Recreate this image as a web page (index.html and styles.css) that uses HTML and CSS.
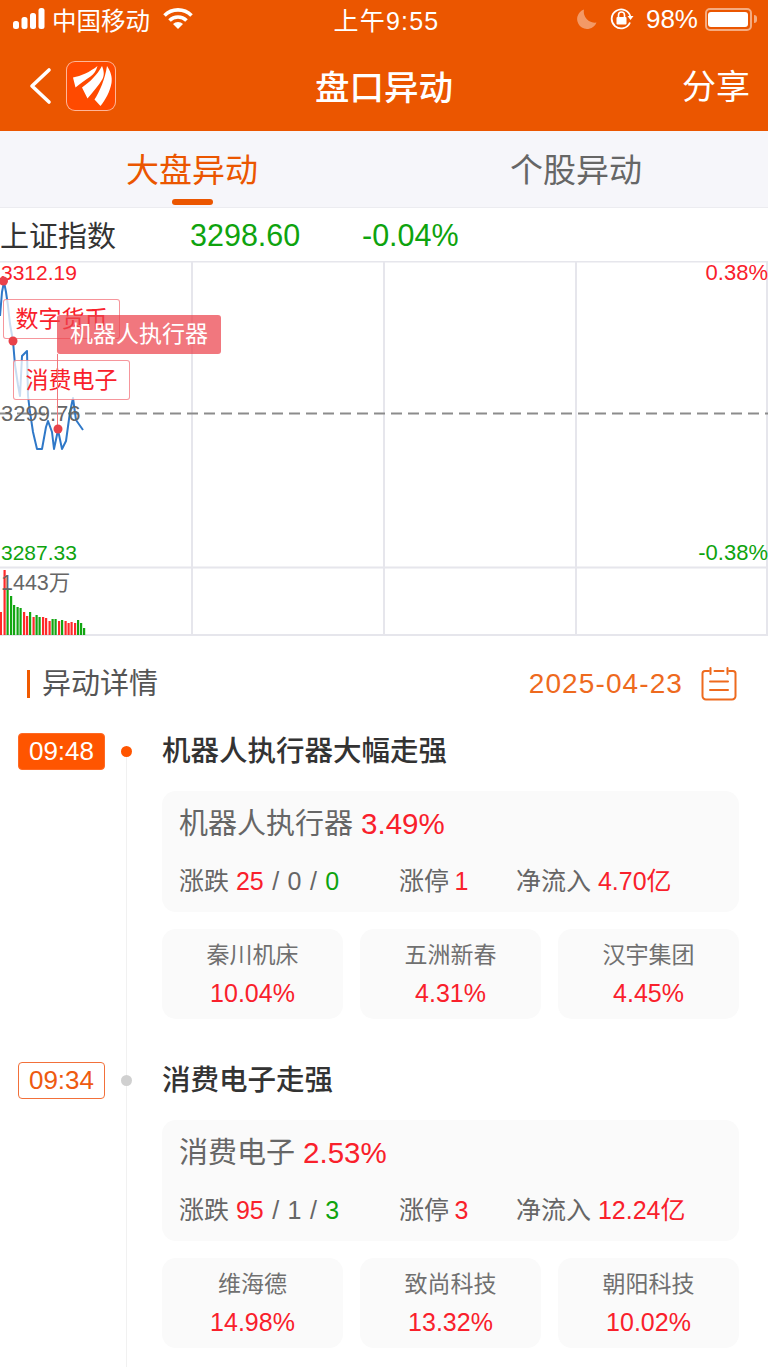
FILE: index.html
```html
<!DOCTYPE html>
<html lang="zh-CN">
<head>
    <meta charset="UTF-8" />
    <title>盘口异动</title>
    <link rel="stylesheet" href="styles.css">
</head>
<body>
    <header class="top-bar">
        <div class="status-bar">
            <div class="status-side">
                <svg class="signal" width="33" height="22" viewBox="0 0 33 22">
                    <rect x="0" y="13" width="6" height="8" rx="2.5" fill="#fff"/>
                    <rect x="8.5" y="9" width="6" height="12" rx="2.5" fill="#fff"/>
                    <rect x="17" y="5" width="6" height="16" rx="2.5" fill="#fff"/>
                    <rect x="25.5" y="0" width="6" height="21" rx="2.5" fill="#fff"/>
                </svg>
                <span class="carrier">中国移动</span>
                <svg class="wifi" width="30" height="22" viewBox="0 0 30 22">
                    <path d="M1.5 7.5 A19 19 0 0 1 28.5 7.5" fill="none" stroke="#fff" stroke-width="3.6"/>
                    <path d="M6.5 12.5 A12 12 0 0 1 23.5 12.5" fill="none" stroke="#fff" stroke-width="3.6"/>
                    <path d="M10 16 L15 21 L20 16 A7 7 0 0 0 10 16 Z" fill="#fff"/>
                </svg>
            </div>
            <div class="status-time">上午9:55</div>
            <div class="status-side status-right">
                <svg class="moon" width="20" height="20" viewBox="0 0 20 20">
                    <path d="M7 0.5 A10 10 0 1 0 19.5 13.5 A11 11 0 0 1 7 0.5 Z" fill="#fff" fill-opacity="0.4"/>
                </svg>
                <svg class="lock" width="24" height="22" viewBox="0 0 24 22">
                    <path d="M20 14.5 A9.5 9.5 0 1 1 20.5 9" fill="none" stroke="#fff" stroke-width="1.8"/>
                    <path d="M17.5 8 L23.5 8 L20.5 12 Z" fill="#fff"/>
                    <rect x="6.5" y="9" width="10" height="7.5" rx="1" fill="#fff"/>
                    <path d="M8.5 9 V7 A3 3 0 0 1 14.5 7 V9" fill="none" stroke="#fff" stroke-width="1.6"/>
                </svg>
                <span class="battery-pct">98%</span>
                <div class="battery"><div class="battery-fill"></div></div>
                <div class="battery-cap"></div>
            </div>
        </div>
        <nav class="nav-bar">
            <div class="nav-left">
                <svg class="back" width="24" height="38" viewBox="0 0 24 38">
                    <path d="M21 3 L4 19 L21 35" fill="none" stroke="#fff" stroke-width="3.6" stroke-linecap="round" stroke-linejoin="round"/>
                </svg>
                <div class="logo">
                    <svg width="48" height="48" viewBox="0 0 48 48">
                        <path d="M6 15.5 C14 14 23 10 30.5 4 C29 9 27 12 23.5 14.5 C18 18 13 22 8.5 25.5 Z" fill="#fff"/>
                        <path d="M15 25.5 C23 20 30 13 35 4 C37 9 37.5 13 35.5 17 C32 23 26 30 20.5 36.5 Z" fill="#fff"/>
                        <path d="M27.5 37.5 C33 29 38 17 40 4 C43.5 9 45.5 15 44.5 21 C43 30 38 38 33.5 44 Z" fill="#fff"/>
                    </svg>
                </div>
            </div>
            <div class="nav-title">盘口异动</div>
            <div class="nav-share">分享</div>
        </nav>
    </header>

    <div class="tabs">
        <div class="tab tab-active">大盘异动</div>
        <div class="tab">个股异动</div>
    </div>

    <div class="index-row">
        <span class="index-name">上证指数</span>
        <span class="index-price">3298.60</span>
        <span class="index-change">-0.04%</span>
    </div>

    <div class="chart">
        <svg class="chart-layer" width="768" height="375" viewBox="0 261 768 375">
            <g stroke="#e6e6ec" stroke-width="2" fill="none">
                <path d="M0 261.5 H768 M0 567.5 H768 M0 635 H768"/>
                <path d="M192 261 V635 M384 261 V635 M576 261 V635 M767 261 V635"/>
            </g>
            <path d="M0 413.5 H768" stroke="#8c8c8c" stroke-width="2" stroke-dasharray="11 6"/>
            <polyline fill="none" stroke="#2f78c8" stroke-width="2" stroke-linejoin="round"
                points="0,316 2,292 4,282 6,292 8,306 10,324 13,341 15,365 18,385 20,396 22,356 25,353 27,351 28,396 30,412 33,432 37,449 42,449 46,427 48,421 52,432 54,449 58,430 62,449 66,441 70,412 73,398 76,420 83,430"/>
            <g fill="#ff2a2a">
                <rect x="0" y="612" width="2" height="23"/>
                <rect x="3.5" y="570" width="2.2" height="65"/>
                <rect x="23" y="612" width="2.2" height="23"/>
                <rect x="26" y="616" width="2.2" height="19"/>
                <rect x="32.500" y="617" width="2.2" height="18"/>
                <rect x="42" y="617" width="2.2" height="18"/>
                <rect x="45" y="618" width="2.2" height="17"/>
                <rect x="48.500" y="621" width="2.2" height="14"/>
                <rect x="58" y="621" width="2.2" height="14"/>
                <rect x="64.500" y="621" width="2.2" height="14"/>
                <rect x="67.500" y="623" width="2.2" height="12"/>
                <rect x="70.500" y="622" width="2.2" height="13"/>
                <rect x="74" y="623" width="2.2" height="12"/>
            </g>
            <g fill="#12a612">
                <rect x="6.500" y="589" width="2.2" height="46"/>
                <rect x="10" y="596" width="2.2" height="39"/>
                <rect x="13" y="605" width="2.2" height="30"/>
                <rect x="16.500" y="607" width="2.2" height="28"/>
                <rect x="19.500" y="608" width="2.2" height="27"/>
                <rect x="29" y="612" width="2.2" height="23"/>
                <rect x="35.500" y="615" width="2.2" height="20"/>
                <rect x="38.500" y="617" width="2.2" height="18"/>
                <rect x="51.500" y="619" width="2.2" height="16"/>
                <rect x="54.500" y="619" width="2.2" height="16"/>
                <rect x="61" y="620" width="2.2" height="15"/>
                <rect x="77" y="620" width="2.2" height="15"/>
                <rect x="80" y="623" width="2.2" height="12"/>
                <rect x="83" y="628" width="2.2" height="7"/>
            </g>
        </svg>

        <span class="axis axis-high" >3312.19</span>
        <span class="axis axis-high-pct">0.38%</span>
        <span class="axis axis-mid">3299.76</span>
        <span class="axis axis-low">3287.33</span>
        <span class="axis axis-low-pct">-0.38%</span>
        <span class="axis axis-vol">1443万</span>

        <div class="tag tag-digital">数字货币</div>
        <div class="tag tag-consumer">消费电子</div>
        <div class="tag tag-robot">机器人执行器</div>

        <svg class="chart-layer" width="768" height="375" viewBox="0 261 768 375">
            <path d="M57.500 354 V429" stroke="#f0777c" stroke-width="1"/>
            <circle cx="3.500" cy="281" r="4.500" fill="#e8424a"/>
            <circle cx="13" cy="341" r="4.500" fill="#e8424a"/>
            <circle cx="58" cy="429" r="4.500" fill="#e8424a"/>
        </svg>
    </div>

    <div class="section-head">
        <div class="section-title">异动详情</div>
        <div class="section-date">
            <span>2025-04-23</span>
            <svg width="36" height="34" viewBox="0 0 36 34" fill="none" stroke="#ee6a1e" stroke-width="2" stroke-linecap="round">
                <path d="M8 4 H4 A2.500 2.500 0 0 0 1.500 6.500 V29 A3.500 3.500 0 0 0 5 32.500 H31 A3.500 3.500 0 0 0 34.500 29 V6.500 A2.500 2.500 0 0 0 32 4 H28"/>
                <path d="M9.500 1 V7 M26.500 1 V7 M13.500 4 H22.500"/>
                <path d="M9 14.500 H27 M9 23 H27"/>
            </svg>
        </div>
    </div>

    <section class="event event-latest">
        <div class="event-time">
            <span class="time-badge">09:48</span>
            <span class="event-dot"></span>
        </div>
        <div class="event-body">
            <h2 class="event-title">机器人执行器大幅走强</h2>
            <div class="sector-card">
                <div class="sector-name">机器人执行器 <em class="up">3.49%</em></div>
                <div class="sector-stats">
                    <div class="stat-a">涨跌 <em class="up">25</em> / 0 / <em class="down">0</em></div>
                    <div class="stat-b">涨停 <em class="up">1</em></div>
                    <div class="stat-c">净流入 <em class="up">4.70亿</em></div>
                </div>
            </div>
            <div class="stock-list">
                <div class="stock-card"><div class="stock-name">秦川机床</div><div class="stock-pct">10.04%</div></div>
                <div class="stock-card"><div class="stock-name">五洲新春</div><div class="stock-pct">4.31%</div></div>
                <div class="stock-card"><div class="stock-name">汉宇集团</div><div class="stock-pct">4.45%</div></div>
            </div>
        </div>
    </section>

    <section class="event">
        <div class="event-time">
            <span class="time-badge">09:34</span>
            <span class="event-dot"></span>
        </div>
        <div class="event-body">
            <h2 class="event-title">消费电子走强</h2>
            <div class="sector-card">
                <div class="sector-name">消费电子 <em class="up">2.53%</em></div>
                <div class="sector-stats">
                    <div class="stat-a">涨跌 <em class="up">95</em> / 1 / <em class="down">3</em></div>
                    <div class="stat-b">涨停 <em class="up">3</em></div>
                    <div class="stat-c">净流入 <em class="up">12.24亿</em></div>
                </div>
            </div>
            <div class="stock-list">
                <div class="stock-card"><div class="stock-name">维海德</div><div class="stock-pct">14.98%</div></div>
                <div class="stock-card"><div class="stock-name">致尚科技</div><div class="stock-pct">13.32%</div></div>
                <div class="stock-card"><div class="stock-name">朝阳科技</div><div class="stock-pct">10.02%</div></div>
            </div>
        </div>
    </section>
</body>
</html>
```

FILE: styles.css
```css
html {
    height: 100%;
}
body {
    margin: 0;
    padding: 0;
    height: 1367px;
    overflow: hidden;
    background: #fff;
    color: #666;
    font-family: "Liberation Sans", "Noto Sans CJK SC", sans-serif;
}
em {
    font-style: normal;
}
.up {
    color: #f9202b;
}
.down {
    color: #0ea30e;
}

/* top bar */
.top-bar {
    height: 131px;
    background: #eb5600;
    color: #fff;
}
.status-bar {
    position: relative;
    height: 38px;
    display: flex;
    align-items: center;
    justify-content: space-between;
    padding: 0 11px 0 13px;
}
.status-side {
    display: flex;
    align-items: center;
}
.signal {
    margin-right: 6px;
}
.carrier {
    font-size: 24.5px;
}
.wifi {
    margin-left: 13px;
}
.status-time {
    position: absolute;
    left: 5px;
    right: 0;
    text-align: center;
    font-size: 25px;
    letter-spacing: 1.2px;
}
.status-right {
    font-size: 26px;
}
.moon {
    margin-right: 13px;
}
.lock {
    margin-right: 12px;
}
.battery-pct {
    margin-right: 7px;
}
.battery {
    width: 41px;
    height: 15px;
    padding: 2px 1px;
    border: 2px solid rgba(255, 255, 255, 0.5);
    border-radius: 5px;
}
.battery-fill {
    width: 98%;
    height: 100%;
    background: #fff;
    border-radius: 3px;
}
.battery-cap {
    width: 3px;
    height: 8px;
    margin-left: 2px;
    background: rgba(255, 255, 255, 0.5);
    border-radius: 0 3px 3px 0;
}
.nav-bar {
    position: relative;
    height: 93px;
    display: flex;
    align-items: center;
    justify-content: space-between;
    padding: 0 18px 0 28px;
}
.nav-left {
    display: flex;
    align-items: center;
    gap: 14px;
    margin-top: 2px;
}
.logo {
    width: 48px;
    height: 48px;
    background: #ff4a00;
    border: 1px solid rgba(255, 255, 255, 0.6);
    border-radius: 9px;
}
.logo svg {
    display: block;
}
.nav-title {
    position: absolute;
    left: 0;
    right: 0;
    text-align: center;
    font-size: 34.5px;
    font-weight: 500;
}
.nav-share {
    font-size: 34px;
}

/* tabs */
.tabs {
    height: 77px;
    display: flex;
    background: #f6f6fa;
    border-bottom: 1px solid #ececf0;
    box-sizing: border-box;
}
.tab {
    position: relative;
    flex: 1;
    text-align: center;
    font-size: 33px;
    line-height: 80px;
    color: #666;
}
.tab-active {
    color: #eb5600;
}
.tab-active::after {
    content: "";
    position: absolute;
    left: 172px;
    bottom: 2px;
    width: 41px;
    height: 6px;
    background: #eb5600;
    border-radius: 3px;
}

/* index row */
.index-row {
    height: 52px;
    display: flex;
    align-items: center;
    font-size: 30.5px;
}
.index-name {
    width: 190px;
    font-size: 29px;
    color: #333;
}
.index-price {
    width: 172px;
    padding-top: 2px;
    color: #0ea30e;
}
.index-change {
    padding-top: 2px;
    color: #0ea30e;
}

/* chart, a free canvas: everything inside has its place by coordinate */
.chart {
    position: relative;
    height: 375px;
    margin-top: 1px;
}
.chart-layer {
    position: absolute;
    top: 0;
    left: 0;
}
.axis {
    position: absolute;
    font-size: 21px;
    line-height: 24px;
    white-space: nowrap;
}
.axis-high {
    left: 1px;
    top: 0;
    color: #f9202b;
}
.axis-high-pct {
    right: 0;
    top: 0;
    font-size: 22px;
    color: #f9202b;
}
.axis-mid {
    left: 1px;
    top: 141px;
    font-size: 22px;
    color: #666;
}
.axis-low {
    left: 1px;
    top: 280px;
    color: #0ea30e;
}
.axis-low-pct {
    right: 0;
    top: 280px;
    font-size: 22px;
    color: #0ea30e;
}
.axis-vol {
    left: 1px;
    top: 310px;
    font-size: 21.5px;
    color: #666;
}
.tag {
    position: absolute;
    box-sizing: border-box;
    height: 40px;
    line-height: 39px;
    text-align: center;
    font-size: 23px;
    border-radius: 3px;
    white-space: nowrap;
}
.tag-digital, .tag-consumer {
    width: 117px;
    color: #f9202b;
    background: rgba(255, 255, 255, 0.75);
    border: 1px solid rgba(240, 80, 90, 0.6);
}
.tag-digital {
    left: 3px;
    top: 38px;
}
.tag-consumer {
    left: 13px;
    top: 99px;
}
.tag-robot {
    left: 57px;
    top: 54px;
    width: 164px;
    height: 39px;
    color: #fff;
    background: rgba(236, 66, 76, 0.72);
}

/* section head */
.section-head {
    height: 97px;
    display: flex;
    align-items: center;
    justify-content: space-between;
    padding: 0 31px 2px 27px;
    box-sizing: border-box;
}
.section-title {
    border-left: 3px solid #f05a00;
    padding-left: 12px;
    font-size: 29px;
    line-height: 28px;
    color: #555;
}
.section-date {
    display: flex;
    align-items: center;
    gap: 18px;
    font-size: 28px;
    letter-spacing: 1.1px;
    color: #ee6a1e;
}

/* events */
.event {
    display: flex;
    height: 329px;
    position: relative;
}
.event-time {
    position: relative;
    width: 162px;
    flex-shrink: 0;
}
.event-time::before {
    content: "";
    position: absolute;
    left: 125.5px;
    top: 0;
    bottom: 0;
    width: 1px;
    background: #f1f1f1;
}
.event-latest .event-time::before {
    top: 18px;
}
.time-badge {
    position: absolute;
    left: 18px;
    top: 0;
    box-sizing: border-box;
    width: 87px;
    height: 37px;
    line-height: 35px;
    text-align: center;
    font-size: 26px;
    color: #ee5a10;
    background: #fff;
    border: 1px solid #f2703a;
    border-radius: 4px;
}
.event-latest .time-badge {
    color: #fff;
    background: #ff5500;
    border-color: #ff6a25;
}
.event-dot {
    position: absolute;
    left: 120.5px;
    top: 13px;
    width: 11px;
    height: 11px;
    background: #d0d0d0;
    border-radius: 50%;
}
.event-latest .event-dot {
    background: #ff5500;
}
.event-body {
    width: 577px;
}
.event-title {
    margin: 0;
    height: 58px;
    line-height: 37px;
    font-size: 28.5px;
    font-weight: 500;
    color: #333;
}
.sector-card {
    box-sizing: border-box;
    height: 121px;
    padding: 15px 17px 0;
    background: #fafafa;
    border-radius: 14px;
}
.sector-name {
    font-size: 29px;
    line-height: 36px;
    color: #666;
}
.sector-name em {
    font-size: 29.5px;
}
.sector-stats {
    display: flex;
    margin-top: 23px;
    font-size: 25px;
    line-height: 32px;
    color: #666;
    white-space: nowrap;
}
.stat-a {
    width: 220px;
    word-spacing: 1.5px;
}
.stat-a .up {
    margin-left: -1.5px;
}
.stat-b {
    width: 117px;
}
.stat-b .up {
    margin-left: -1.5px;
}
.stock-list {
    display: grid;
    grid-template-columns: repeat(3, 181px);
    gap: 17px;
    margin-top: 17px;
}
.stock-card {
    height: 90px;
    padding-top: 10px;
    box-sizing: border-box;
    text-align: center;
    background: #fafafa;
    border-radius: 14px;
}
.stock-name {
    font-size: 23px;
    line-height: 32px;
    color: #707070;
}
.stock-pct {
    margin-top: 6px;
    font-size: 25px;
    line-height: 32px;
    color: #f9202b;
}
```
